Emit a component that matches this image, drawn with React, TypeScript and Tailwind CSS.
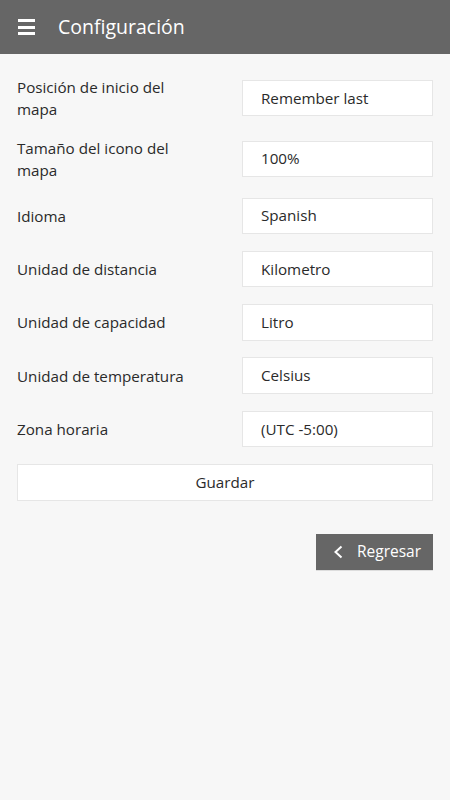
import React from 'react';

const settings = [
  { label: 'Posición de inicio del mapa', value: 'Remember last' },
  { label: 'Tamaño del icono del mapa', value: '100%' },
  { label: 'Idioma', value: 'Spanish' },
  { label: 'Unidad de distancia', value: 'Kilometro' },
  { label: 'Unidad de capacidad', value: 'Litro' },
  { label: 'Unidad de temperatura', value: 'Celsius' },
  { label: 'Zona horaria', value: '(UTC -5:00)' },
];

const App = () => {
  return (
    <div
      className="min-h-[800px] w-[450px] bg-[#f7f7f7] text-[#2a2a2a]"
      style={{ fontFamily: '"Open Sans", "Liberation Sans", sans-serif' }}
    >
      {/* Header */}
      <header className="flex h-[54px] items-center bg-[#666666]">
        <div className="ml-[18px] flex w-[17px] flex-col gap-[3.5px]">
          <span className="block h-[3px] w-[17px] bg-white"></span>
          <span className="block h-[3px] w-[17px] bg-white"></span>
          <span className="block h-[3px] w-[17px] bg-white"></span>
        </div>
        <h1 className="ml-[23px] text-[19.5px] leading-none text-white">Configuración</h1>
      </header>

      {/* Settings form */}
      <div className="flex flex-col gap-[16.8px] px-[17px] pt-[22px]">
        {settings.map((item) => (
          <div key={item.label} className="flex items-center justify-between">
            <div className="w-[185px] text-[15.2px] leading-[22px]">{item.label}</div>
            <div className="flex h-[36.5px] w-[191px] items-center border border-[#e6e6e6] bg-white pl-[18px] text-[15.2px]">
              {item.value}
            </div>
          </div>
        ))}
        <button className="h-[36.5px] w-full border border-[#e6e6e6] bg-white text-[15.2px] text-[#2a2a2a]">
          Guardar
        </button>
      </div>

      <div className="flex justify-end px-[17px] pt-[33px]">
        <button className="flex h-[37px] w-[117px] items-center border-b border-[#dddddd] bg-[#666666] pl-[17px] text-[15.5px] text-white">
          <svg width="10" height="14" viewBox="0 0 10 14" className="mr-[14px]">
            <path d="M8.5 1.5 L2.5 7 L8.5 12.5" fill="none" stroke="white" strokeWidth="2" />
          </svg>
          Regresar
        </button>
      </div>
    </div>
  );
};

export default App;
